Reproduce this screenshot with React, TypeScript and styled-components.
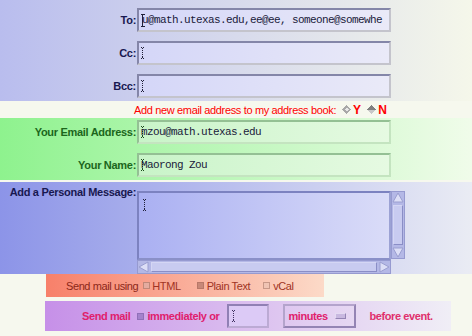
import React from 'react';
import styled, { createGlobalStyle } from 'styled-components';

const Global = createGlobalStyle`
  html, body { margin: 0; padding: 0; background: #f6f8ee; }
  body {
    font-family: "Liberation Sans", Arial, sans-serif;
    width: 472px;
    height: 336px;
    overflow: hidden;
  }
`;

type Tone = 'blue' | 'green' | 'purple';

const tones: Record<Tone, { bg: string; dark: string; light: string; label: string }> = {
  blue: {
    bg: 'linear-gradient(to right, #d4d6f8, #eaeaf8)',
    dark: '#8486a8',
    light: '#c4c4cc',
    label: '#181850',
  },
  green: {
    bg: 'linear-gradient(to right, #c8f4c8, #e6fae2)',
    dark: '#94c094',
    light: '#c4e4c0',
    label: '#1c661c',
  },
  purple: {
    bg: '#dccaf6',
    dark: '#9080b4',
    light: '#bcaad4',
    label: '#e0206c',
  },
};

const Page = styled.form`
  width: 472px;
  height: 336px;
  display: flex;
  flex-direction: column;
  background: #f6f8ee;
`;

const Section = styled.div<{ $bg: string; $pad: string }>`
  background: ${(p) => p.$bg};
  padding: ${(p) => p.$pad};
  display: grid;
  row-gap: 9px;
`;

const Row = styled.div`
  display: grid;
  grid-template-columns: 137px 254px;
  align-items: center;
`;

const Label = styled.label<{ $tone: Tone }>`
  text-align: right;
  padding-right: 1px;
  font-weight: bold;
  font-size: 11px;
  line-height: 13px;
  letter-spacing: -0.3px;
  white-space: nowrap;
  color: ${(p) => tones[p.$tone].label};
`;

const Field = styled.div<{ $tone: Tone; $width?: number }>`
  box-sizing: border-box;
  height: 24px;
  width: ${(p) => (p.$width ? `${p.$width}px` : 'auto')};
  border: 2px solid;
  border-color: ${(p) => `${tones[p.$tone].dark} ${tones[p.$tone].light} ${tones[p.$tone].light} ${tones[p.$tone].dark}`};
  background: ${(p) => tones[p.$tone].bg};
  display: flex;
  align-items: center;
  padding-left: 2px;
  overflow: hidden;
  font-family: "Liberation Mono", "Courier New", monospace;
  font-size: 11px;
  letter-spacing: -0.6px;
  color: #1a1a3a;
  white-space: nowrap;
`;

const FieldText = styled.span`
  margin-left: -1px;
`;

const CaretSvg = styled.svg`
  flex: none;
  margin-right: -2px;
  shape-rendering: crispEdges;
`;

const Caret = ({ dotted, color = '#20203a' }: { dotted?: boolean; color?: string }) =>
  dotted ? (
    <CaretSvg width="3" height="12" viewBox="0 0 3 12">
      <g fill={color}>
        <rect x="0" y="0" width="1" height="1" />
        <rect x="2" y="0" width="1" height="1" />
        <rect x="1" y="1" width="1" height="1" />
        <rect x="1" y="3" width="1" height="1" />
        <rect x="1" y="5" width="1" height="1" />
        <rect x="1" y="7" width="1" height="1" />
        <rect x="1" y="9" width="1" height="1" />
        <rect x="0" y="11" width="1" height="1" />
        <rect x="2" y="11" width="1" height="1" />
        <rect x="1" y="10" width="1" height="1" />
      </g>
    </CaretSvg>
  ) : (
    <CaretSvg width="4" height="13" viewBox="0 0 4 13">
      <g fill={color}>
        <rect x="0" y="0" width="4" height="1" />
        <rect x="1" y="1" width="1" height="11" />
        <rect x="0" y="12" width="4" height="1" />
      </g>
    </CaretSvg>
  );

const Note = styled.div`
  height: 17px;
  box-sizing: border-box;
  padding-left: 134px;
  display: flex;
  align-items: center;
  font-size: 11px;
  letter-spacing: -0.35px;
  color: #ff0000;
  white-space: nowrap;
`;

const Choice = styled.span`
  display: inline-flex;
  align-items: center;
  gap: 2px;
  margin-left: 6px;
  font-weight: bold;
  font-size: 12px;
  letter-spacing: 0;
`;

const Diamond = ({ filled }: { filled?: boolean }) => (
  <svg width="9" height="9" viewBox="0 0 9 9" style={{ shapeRendering: 'crispEdges' }}>
    {filled ? (
      <>
        <polygon points="4.5,0 9,4.5 4.5,9 0,4.5" fill="#c8c8c8" />
        <polygon points="4.5,0 9,4.5 0,4.5" fill="#808080" />
      </>
    ) : (
      <>
        <polygon points="4.5,0 9,4.5 4.5,9 0,4.5" fill="#a8a8a8" />
        <polygon points="4.5,2.5 6.5,4.5 4.5,6.5 2.5,4.5" fill="#e8e8e8" />
      </>
    )}
  </svg>
);

const MessageSection = styled.div`
  margin-top: 2px;
  height: 92px;
  box-sizing: border-box;
  padding-top: 4px;
  background: linear-gradient(to right, #8c94e8, #eaecf4);
  display: grid;
  grid-template-columns: 137px auto;
  align-items: start;
`;

const TextAreaBox = styled.div`
  margin-top: 5px;
  display: grid;
  grid-template-columns: 254px 14px;
  grid-template-rows: 69px 14px;
`;

const TextArea = styled.div`
  box-sizing: border-box;
  border: 2px solid;
  border-color: #7c82c0 #9ca2d4 #8a90c8 #7c82c0;
  background: linear-gradient(to right, #aab0f2, #dadcf8);
  padding: 4px 0 0 4px;
`;

const ScrollBar = styled.div<{ $vertical?: boolean }>`
  box-sizing: border-box;
  display: flex;
  flex-direction: ${(p) => (p.$vertical ? 'column' : 'row')};
  align-items: stretch;
  background: #b4b8e6;
  border: 1px solid #969ad0;
  height: ${(p) => (p.$vertical ? '68px' : '14px')};
`;

const Thumb = styled.div`
  flex: 1;
  margin: 1px;
  border: 1px solid;
  border-color: #d4d6f4 #8a8ec6 #8a8ec6 #d4d6f4;
  background: #c8cbf0;
`;

const Arrow = ({ dir }: { dir: 'up' | 'down' | 'left' | 'right' }) => {
  const pts = {
    up: '6,1 11,10 1,10',
    down: '1,2 11,2 6,11',
    left: '1,6 10,1 10,11',
    right: '2,1 11,6 2,11',
  }[dir];
  return (
    <svg width="12" height="12" viewBox="0 0 12 12" style={{ flex: 'none' }}>
      <polygon points={pts} fill="#dcdef6" stroke="#9a9ed0" strokeWidth="1" />
    </svg>
  );
};

const Bar = styled.div<{ $bg: string; $ml: number; $w: number; $h: number; $mt: number; $pl: number }>`
  margin: ${(p) => p.$mt}px 0 0 ${(p) => p.$ml}px;
  width: ${(p) => p.$w}px;
  height: ${(p) => p.$h}px;
  box-sizing: border-box;
  padding-left: ${(p) => p.$pl}px;
  background: ${(p) => p.$bg};
  display: flex;
  align-items: center;
  font-size: 11px;
  letter-spacing: -0.4px;
  white-space: nowrap;
`;

const Text = styled.span<{ $color: string; $bold?: boolean; $ml?: number }>`
  color: ${(p) => p.$color};
  font-weight: ${(p) => (p.$bold ? 'bold' : 'normal')};
  margin-left: ${(p) => p.$ml ?? 0}px;
`;

const Check = styled.span<{ $fill: string; $edge: string; $ml?: number }>`
  display: inline-block;
  flex: none;
  width: 7px;
  height: 7px;
  box-sizing: border-box;
  border: 1px solid ${(p) => p.$edge};
  background: ${(p) => p.$fill};
  margin-left: ${(p) => p.$ml ?? 0}px;
`;

const Select = styled.div`
  box-sizing: border-box;
  margin-left: 14px;
  width: 73px;
  height: 24px;
  border: 2px solid;
  border-color: #b4a4cc #9484b4 #9484b4 #b4a4cc;
  display: flex;
  align-items: center;
  padding: 0 8px 0 3px;
  font-weight: bold;
  color: #e0206c;
`;

const SelectButton = styled.span`
  margin-left: auto;
  width: 11px;
  height: 6px;
  box-sizing: border-box;
  border: 1px solid;
  border-color: #e4daf2 #9484b4 #9484b4 #e4daf2;
  background: #c8b8e0;
`;

export default function App() {
  return (
    <>
      <Global />
      <Page>
        <Section $bg="linear-gradient(to right, #b9bdee, #f5f7ea)" $pad="8px 0 3px">
          <Row>
            <Label $tone="blue">To:</Label>
            <Field $tone="blue">
              <Caret />
              <FieldText>u@math.utexas.edu,ee@ee, someone@somewhe</FieldText>
            </Field>
          </Row>
          <Row>
            <Label $tone="blue">Cc:</Label>
            <Field $tone="blue">
              <Caret dotted />
            </Field>
          </Row>
          <Row>
            <Label $tone="blue">Bcc:</Label>
            <Field $tone="blue">
              <Caret dotted />
            </Field>
          </Row>
        </Section>

        <Note>
          Add new email address to my address book:
          <Choice>
            <Diamond />Y
          </Choice>
          <Choice>
            <Diamond filled />N
          </Choice>
        </Note>

        <Section $bg="linear-gradient(to right, #8ef28e, #f0fcea)" $pad="2px 0 3px">
          <Row>
            <Label $tone="green">Your Email Address:</Label>
            <Field $tone="green">
              <Caret dotted color="#1c4a1c" />
              <FieldText>mzou@math.utexas.edu</FieldText>
            </Field>
          </Row>
          <Row>
            <Label $tone="green">Your Name:</Label>
            <Field $tone="green">
              <Caret dotted color="#1c4a1c" />
              <FieldText>Maorong Zou</FieldText>
            </Field>
          </Row>
        </Section>

        <MessageSection>
          <Label $tone="blue">Add a Personal Message:</Label>
          <TextAreaBox>
            <TextArea>
              <Caret dotted />
            </TextArea>
            <ScrollBar $vertical>
              <Arrow dir="up" />
              <Thumb />
              <Arrow dir="down" />
            </ScrollBar>
            <ScrollBar>
              <Arrow dir="left" />
              <Thumb />
              <Arrow dir="right" />
            </ScrollBar>
          </TextAreaBox>
        </MessageSection>

        <Bar $bg="linear-gradient(to right, #f7806a, #fcdac8)" $ml={46} $w={278} $h={23} $mt={0} $pl={20}>
          <Text $color="#8c2818">Send mail using</Text>
          <Check $fill="#e4aca0" $edge="#c08878" $ml={5} />
          <Text $color="#a03424" $ml={2}>HTML</Text>
          <Check $fill="#c88878" $edge="#b87868" $ml={16} />
          <Text $color="#a03424" $ml={3}>Plain Text</Text>
          <Check $fill="#f0c4b4" $edge="#c89888" $ml={13} />
          <Text $color="#a03424" $ml={3}>vCal</Text>
        </Bar>

        <Bar $bg="linear-gradient(to right, #c690e8, #f0eef6)" $ml={45} $w={406} $h={30} $mt={4} $pl={37}>
          <Text $color="#e0206c" $bold>Send mail</Text>
          <Check $fill="#a482cc" $edge="#9070b8" $ml={7} />
          <Text $color="#e0206c" $bold $ml={3}>immediately or</Text>
          <Field $tone="purple" $width={42} style={{ marginLeft: 8, paddingLeft: 3 }}>
            <Caret dotted color="#403060" />
          </Field>
          <Select>
            minutes
            <SelectButton />
          </Select>
          <Text $color="#e0306c" $bold $ml={13}>before event.</Text>
        </Bar>
      </Page>
    </>
  );
}
